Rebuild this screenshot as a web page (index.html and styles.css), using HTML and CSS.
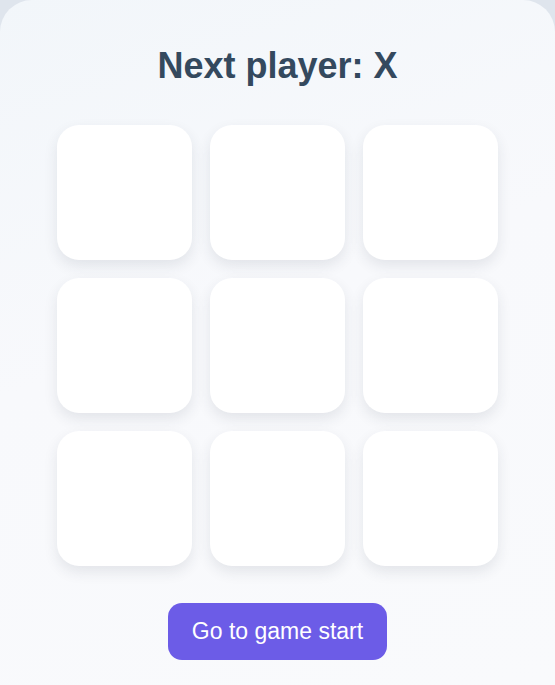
FILE: index.html
```html
<!DOCTYPE html>
<html lang="en">
<head>
<meta charset="utf-8">
<title>Tic Tac Toe</title>
<link rel="stylesheet" href="styles.css">
</head>
<body>
<main class="game">
  <h1 class="status">Next player: X</h1>
  <div class="board">
    <button class="square"></button>
    <button class="square"></button>
    <button class="square"></button>
    <button class="square"></button>
    <button class="square"></button>
    <button class="square"></button>
    <button class="square"></button>
    <button class="square"></button>
    <button class="square"></button>
  </div>
  <button class="restart">Go to game start</button>
</main>
</body>
</html>
```
FILE: styles.css
```css
html, body {
  margin: 0;
  padding: 0;
}
body {
  background: #dfe5ed;
  font-family: "Liberation Sans", Arial, sans-serif;
}
.game {
  min-height: 100vh;
  box-sizing: border-box;
  padding-top: 45px;
  border-radius: 32px 32px 0 0;
  background: linear-gradient(160deg, #f2f6fa 0%, #f8f9fc 45%, #f9fafc 100%);
  display: flex;
  flex-direction: column;
  align-items: center;
}
.status {
  margin: 0 0 39px;
  font-size: 36px;
  line-height: 41px;
  font-weight: 700;
  color: #34495e;
}
.board {
  display: grid;
  grid-template-columns: repeat(3, 135px);
  grid-auto-rows: 135px;
  gap: 18px;
}
.square {
  border: none;
  padding: 0;
  background: #ffffff;
  border-radius: 22px;
  box-shadow: 0 6px 14px rgba(40, 50, 70, 0.10);
}
.restart {
  margin-top: 37px;
  border: none;
  background: #6c5ce7;
  color: #ffffff;
  font-family: "Liberation Sans", Arial, sans-serif;
  font-size: 23px;
  line-height: 25px;
  padding: 16px 24px;
  border-radius: 14px;
}
```
